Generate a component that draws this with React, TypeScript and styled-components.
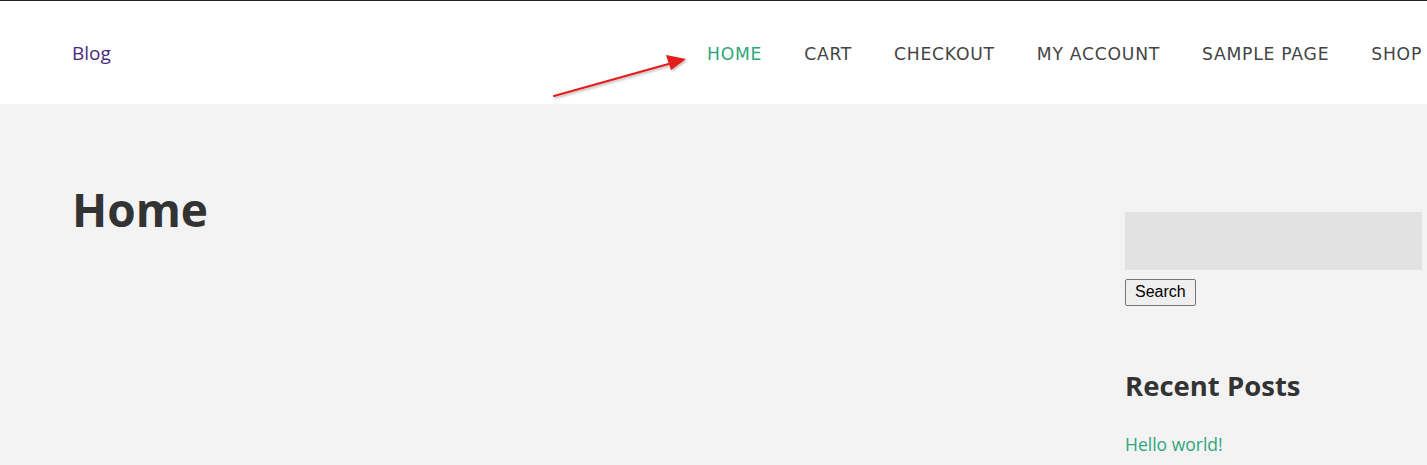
import React from 'react'
import styled, { createGlobalStyle } from 'styled-components'

const Colors = {
  page: '#f3f3f3',
  white: '#ffffff',
  dark: '#333333',
  nav: '#444444',
  green: '#2fa67c',
  purple: '#4a2a7e',
  field: '#e2e2e2',
  red: '#e51c1c',
}

const GlobalStyle = createGlobalStyle`
  html, body {
    margin: 0;
    padding: 0;
    background: ${Colors.page};
  }
  * {
    box-sizing: border-box;
  }
`

const Page = styled.div`
  position: relative;
  width: 1427px;
  height: 465px;
  overflow: hidden;
  background: ${Colors.page};
  font-family: 'Open Sans', sans-serif;
`

const Header = styled.header`
  height: 104px;
  background: ${Colors.white};
  border-top: 1px solid #222222;
  display: flex;
  align-items: center;
  justify-content: space-between;
  padding: 0 5px 0 72px;
`

const Brand = styled.a`
  font-family: 'Open Sans', sans-serif;
  font-size: 19px;
  color: ${Colors.purple};
  text-decoration: none;
  margin-top: 1px;
`

const Nav = styled.nav`
  display: flex;
  gap: 42px;
  margin-top: 2px;
`

const NavItem = styled.a<{ active?: boolean }>`
  font-family: 'DejaVu Sans', sans-serif;
  font-size: 17.2px;
  letter-spacing: 0.75px;
  font-weight: 400;
  color: ${props => props.active ? Colors.green : Colors.nav};
  text-decoration: none;
  white-space: nowrap;
`

const Arrow = styled.svg`
  position: absolute;
  left: 550px;
  top: 52px;
`

const Main = styled.main`
  display: grid;
  grid-template-columns: 1fr 297px;
  column-gap: 60px;
  padding: 76px 5px 0 72px;
`

const Title = styled.h1`
  margin: 0;
  font-size: 46px;
  line-height: 58px;
  font-weight: 700;
  color: ${Colors.dark};
`

const Sidebar = styled.aside`
  padding-top: 32px;
  display: flex;
  flex-direction: column;
`

const SearchField = styled.input`
  width: 297px;
  height: 58px;
  border: none;
  background: ${Colors.field};
  outline: none;
`

const SearchButton = styled.button`
  align-self: flex-start;
  margin-top: 9px;
  height: 27px;
  padding: 0 9px 1px;
  font-family: 'Liberation Sans', Arial, sans-serif;
  font-size: 16px;
  color: #000000;
  background: #efefef;
  border: 1px solid #767676;
  border-radius: 2px;
`

const WidgetTitle = styled.h2`
  margin: 62px 0 0;
  font-size: 27.5px;
  line-height: 1.3;
  font-weight: 700;
  color: ${Colors.dark};
`

const PostLink = styled.a`
  margin-top: 28px;
  font-size: 17.5px;
  color: ${Colors.green};
  text-decoration: none;
`

const navItems = ['HOME', 'CART', 'CHECKOUT', 'MY ACCOUNT', 'SAMPLE PAGE', 'SHOP']

export default function App() {
  return (
    <Page>
      <GlobalStyle />
      <Header>
        <Brand>Blog</Brand>
        <Nav>
          {navItems.map(item => (
            <NavItem key={item} active={item === 'HOME'}>{item}</NavItem>
          ))}
        </Nav>
      </Header>
      <Arrow width="145" height="52" viewBox="0 0 145 52">
        <defs>
          <filter id="shadow" x="-10%" y="-30%" width="120%" height="160%">
            <feDropShadow dx="1" dy="1.5" stdDeviation="1" floodColor="#000" floodOpacity="0.3" />
          </filter>
        </defs>
        <g filter="url(#shadow)">
          <line x1="4" y1="44" x2="122" y2="11" stroke={Colors.red} strokeWidth="2.2" strokeLinecap="round" />
          <polygon points="136,7 116,3 121,18" fill={Colors.red} />
        </g>
      </Arrow>
      <Main>
        <div>
          <Title>Home</Title>
        </div>
        <Sidebar>
          <SearchField type="text" />
          <SearchButton>Search</SearchButton>
          <WidgetTitle>Recent Posts</WidgetTitle>
          <PostLink>Hello world!</PostLink>
        </Sidebar>
      </Main>
    </Page>
  )
}
